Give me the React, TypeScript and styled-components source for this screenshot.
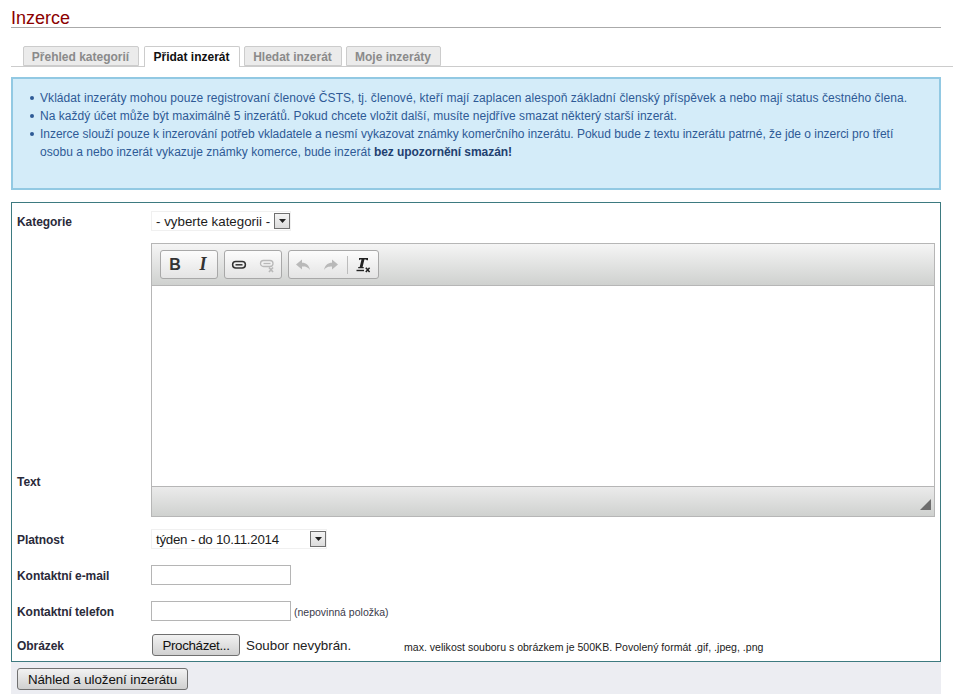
import React from "react"
import styled, { createGlobalStyle } from "styled-components"

const GlobalStyle = createGlobalStyle`
  html, body {
    margin: 0;
    padding: 0;
    background: #fff;
    overflow: hidden;
  }
  body {
    font-family: "Liberation Sans", Arial, sans-serif;
    font-size: 12px;
  }
`

const App = () => {
  return (
    <Page>
      <GlobalStyle />
      <Title>Inzerce</Title>
      <Tabs>
        <Tab $width={116}>Přehled kategorií</Tab>
        <Tab $width={96} $active>Přidat inzerát</Tab>
        <Tab $width={98}>Hledat inzerát</Tab>
        <Tab $width={95}>Moje inzeráty</Tab>
      </Tabs>

      <InfoBox>
        <InfoList>
          <InfoItem $spacing={0.067}>Vkládat inzeráty mohou pouze registrovaní členové ČSTS, tj. členové, kteří mají zaplacen alespoň základní členský příspěvek a nebo mají status čestného člena.</InfoItem>
          <InfoItem $spacing={0.033}>Na každý účet může být maximálně 5 inzerátů. Pokud chcete vložit další, musíte nejdříve smazat některý starší inzerát.</InfoItem>
          <InfoItem $spacing={-0.02}>Inzerce slouží pouze k inzerování potřeb vkladatele a nesmí vykazovat známky komerčního inzerátu. Pokud bude z textu inzerátu patrné, že jde o inzerci pro třetí <SecondLine>osobu a nebo inzerát vykazuje známky komerce, bude inzerát</SecondLine> <b>bez upozornění smazán!</b></InfoItem>
        </InfoList>
      </InfoBox>

      <FormBox>
        <Row>
          <Label>Kategorie</Label>
          <SelectBox $width={140}>
            <SelectText>- vyberte kategorii -</SelectText>
            <SelectArrow><ArrowIcon /></SelectArrow>
          </SelectBox>
        </Row>

        <Row $top={12}>
          <TextLabel>Text</TextLabel>
          <Editor>
            <Toolbar>
              <ToolGroup>
                <ToolButton><Bold>B</Bold></ToolButton>
                <ToolButton><Italic>I</Italic></ToolButton>
              </ToolGroup>
              <ToolGroup>
                <ToolButton><LinkIcon /></ToolButton>
                <ToolButton><UnlinkIcon /></ToolButton>
              </ToolGroup>
              <ToolGroup>
                <ToolButton><UndoIcon /></ToolButton>
                <ToolButton><RedoIcon /></ToolButton>
                <ToolSeparator />
                <ToolButton $wide><ClearIcon /></ToolButton>
              </ToolGroup>
            </Toolbar>
            <EditorBody />
            <EditorFooter><ResizeIcon /></EditorFooter>
          </Editor>
        </Row>

        <Row $top={12}>
          <Label>Platnost</Label>
          <SelectBox $width={176}>
            <SelectText $spacing={-0.28}>týden - do 10.11.2014</SelectText>
            <SelectArrow><ArrowIcon /></SelectArrow>
          </SelectBox>
        </Row>

        <Row $top={16}>
          <Label>Kontaktní e-mail</Label>
          <TextInput type="text" />
        </Row>

        <Row $top={16}>
          <Label>Kontaktní telefon</Label>
          <TextInput type="text" />
          <SmallNote>(nepovinná položka)</SmallNote>
        </Row>

        <Row $top={13}>
          <Label>Obrázek</Label>
          <FileButton type="button">Procházet...</FileButton>
          <FileName>Soubor nevybrán.</FileName>
          <FileHint>max. velikost souboru s obrázkem je 500KB. Povolený formát .gif, .jpeg, .png</FileHint>
        </Row>
      </FormBox>

      <SubmitBar>
        <SubmitButton type="button">Náhled a uložení inzerátu</SubmitButton>
      </SubmitBar>
    </Page>
  )
}

const ArrowIcon = () => (
  <svg width="7" height="4" viewBox="0 0 7 4"><path d="M0 0h7L3.5 4z" fill="#222" /></svg>
)

const LinkIcon = () => (
  <svg width="16" height="16" viewBox="0 0 16 16" fill="none" stroke="#333">
    <rect x="1.6" y="4.6" width="12.8" height="6.4" rx="3.2" strokeWidth="1.5" />
    <path d="M4.5 7.8h7" strokeWidth="1.5" />
  </svg>
)

const UnlinkIcon = () => (
  <svg width="16" height="16" viewBox="0 0 16 16" fill="none" stroke="#b9b9b9">
    <rect x="1.5" y="3.5" width="12.5" height="6" rx="3" strokeWidth="1.3" />
    <path d="M4.5 6.5h7" strokeWidth="1.3" />
    <path d="M10 10.5l4 4.5M14 10.5l-4 4.5" strokeWidth="1.7" />
  </svg>
)

const UndoIcon = () => (
  <svg width="16" height="16" viewBox="0 0 16 16"><path d="M1 7.5L7 2.5v3.2c4 0 7 2 8 7.3-2-3-4-3.6-8-3.6v3.1z" fill="#b9b9b9" /></svg>
)

const RedoIcon = () => (
  <svg width="16" height="16" viewBox="0 0 16 16"><path d="M15 7.5L9 2.5v3.2c-4 0-7 2-8 7.3 2-3 4-3.6 8-3.6v3.1z" fill="#b9b9b9" /></svg>
)

const ClearIcon = () => (
  <svg width="16" height="16" viewBox="0 0 16 16">
    <path d="M4 1h9v2.2h-1.2L11 2.4H9.4L7.6 10h1.1v1.2H3.2V10h1.5l1.8-7.6H5.2l-1.2.8z" fill="#222" />
    <path d="M1.5 12.8h7.5v1.4H1.5z" fill="#222" />
    <path d="M10.8 10.8l3.8 4.2M14.6 10.8l-3.8 4.2" stroke="#222" strokeWidth="1.5" fill="none" />
  </svg>
)

const ResizeIcon = () => (
  <svg width="11" height="11" viewBox="0 0 11 11"><path d="M11 0v11H0z" fill="#6e6e6e" /></svg>
)

const Page = styled.div`
  width: 953px;
  height: 694px;
  box-sizing: border-box;
  padding-top: 8px;
  overflow: hidden;
  color: #2a2a3a;
`

const Title = styled.h1`
  margin: 0 12px 0 11px;
  height: 19px;
  line-height: 21px;
  border-bottom: 1px solid #aaa;
  color: #8b0000;
  font-size: 18px;
  font-weight: normal;
`

const Tabs = styled.div`
  display: flex;
  gap: 4px;
  height: 20px;
  margin: 18px 0 0 11px;
  padding-left: 12px;
  border-bottom: 1px solid #ccc;
`

const Tab = styled.div<{ $active?: boolean; $width: number }>`
  box-sizing: border-box;
  width: ${({ $width }) => $width}px;
  height: ${({ $active }) => ($active ? "21px" : "20px")};
  margin-left: ${({ $active }) => ($active ? "1px" : "0")};
  padding-right: 1px;
  line-height: 20px;
  font-size: 12px;
  font-weight: bold;
  text-align: center;
  white-space: nowrap;
  border: 1px solid #ccc;
  border-bottom: ${({ $active }) => ($active ? "none" : "1px solid #ccc")};
  border-radius: 2px 2px 0 0;
  background: ${({ $active }) => ($active ? "#fff" : "#ebebeb")};
  color: ${({ $active }) => ($active ? "#111" : "#8a8a8a")};
`

const InfoBox = styled.div`
  box-sizing: border-box;
  width: 930px;
  height: 113px;
  margin: 10px 0 0 11px;
  padding: 10px 26px 0 27px;
  background: #d4ecf9;
  border: 2px solid #92c9e3;
  color: #2e5a96;
  line-height: 18px;
`

const InfoList = styled.ul`
  margin: 0;
  padding: 0;
  list-style: none;

  b {
    color: #1f4070;
    letter-spacing: -0.06px;
  }
`

const InfoItem = styled.li<{ $spacing: number }>`
  position: relative;
  letter-spacing: ${({ $spacing }) => $spacing}px;

  &::before {
    content: "";
    position: absolute;
    left: -10px;
    top: 7px;
    width: 4px;
    height: 4px;
    border-radius: 50%;
    background: #2e5a96;
  }
`

const SecondLine = styled.span`
  letter-spacing: 0.03px;
`

const FormBox = styled.div`
  box-sizing: border-box;
  width: 930px;
  height: 460px;
  margin: 12px 0 0 11px;
  padding: 8px 5px 0 5px;
  border: 1px solid #3d7a80;
`

const Row = styled.div<{ $top?: number }>`
  display: flex;
  align-items: center;
  margin-top: ${({ $top }) => $top || 0}px;
`

const Label = styled.label`
  flex: 0 0 134px;
  padding-top: 2px;
  font-weight: bold;
  font-size: 12px;
  letter-spacing: -0.06px;
  color: #2a2a3a;
`

const TextLabel = styled(Label)`
  align-self: flex-end;
  padding-bottom: 28px;
`

const SelectBox = styled.div<{ $width: number }>`
  box-sizing: border-box;
  display: flex;
  align-items: center;
  justify-content: space-between;
  width: ${({ $width }) => $width}px;
  height: 20px;
  padding: 0 0 0 4px;
  border: 1px solid #f0f0f0;
  background: #fff;
`

const SelectText = styled.span<{ $spacing?: number }>`
  font-size: 13.33px;
  letter-spacing: ${({ $spacing }) => $spacing || 0}px;
  color: #1c1c1c;
  white-space: nowrap;
`

const SelectArrow = styled.span`
  box-sizing: border-box;
  display: flex;
  align-items: center;
  justify-content: center;
  width: 16px;
  height: 16px;
  border: 1px solid #707070;
  background: linear-gradient(#f4f4f4, #dcdcdc);
`

const Editor = styled.div`
  box-sizing: border-box;
  width: 784px;
  height: 274px;
  display: flex;
  flex-direction: column;
  border: 1px solid #b6b6b6;
`

const Toolbar = styled.div`
  box-sizing: border-box;
  flex: 0 0 42px;
  display: flex;
  gap: 6px;
  padding: 6px 8px 0;
  background: linear-gradient(#f5f5f5, #cfd1cf);
  border-bottom: 1px solid #b6b6b6;
`

const ToolGroup = styled.div`
  box-sizing: border-box;
  display: flex;
  align-items: center;
  height: 29px;
  border: 1px solid #a8a8a8;
  border-radius: 3px;
  background: linear-gradient(#fcfcfc, #e4e4e4);
`

const ToolButton = styled.span<{ $wide?: boolean }>`
  display: flex;
  align-items: center;
  justify-content: center;
  width: ${({ $wide }) => ($wide ? "30px" : "28px")};
  height: 27px;
`

const ToolSeparator = styled.span`
  width: 1px;
  height: 18px;
  margin-left: 2px;
  background: #bcbcbc;
`

const Bold = styled.span`
  font: bold 16px "Liberation Sans", Arial, sans-serif;
  color: #333;
`

const Italic = styled.span`
  font: italic bold 18px "Liberation Serif", "Times New Roman", serif;
  color: #333;
`

const EditorBody = styled.div`
  flex: 1;
  background: #fff;
`

const EditorFooter = styled.div`
  box-sizing: border-box;
  flex: 0 0 30px;
  display: flex;
  align-items: flex-end;
  justify-content: flex-end;
  padding: 0 3px 6px 0;
  background: linear-gradient(#ebebeb, #cfd1cf);
  border-top: 1px solid #b6b6b6;
`

const TextInput = styled.input`
  box-sizing: border-box;
  width: 140px;
  height: 20px;
  padding: 0 3px;
  border: 1px solid #b5b5b5;
  background: #fff;
`

const SmallNote = styled.span`
  margin-left: 3px;
  padding-top: 2px;
  font-size: 10.5px;
  color: #3a3a4a;
`

const FileButton = styled.button`
  box-sizing: border-box;
  width: 88px;
  height: 22px;
  margin-left: 1px;
  padding: 0;
  border: 1px solid #707070;
  border-radius: 3px;
  background: linear-gradient(#f2f2f2, #d0d0d0);
  font: 13.33px "Liberation Sans", Arial, sans-serif;
  letter-spacing: -0.33px;
  color: #111;
`

const FileName = styled.span`
  margin-left: 6px;
  width: 158px;
  font-size: 13.33px;
  color: #222;
  white-space: nowrap;
`

const FileHint = styled.span`
  padding-top: 3px;
  font-size: 10.55px;
  color: #222;
  white-space: nowrap;
`

const SubmitBar = styled.div`
  box-sizing: border-box;
  width: 930px;
  height: 33px;
  margin-left: 11px;
  padding: 6px 0 0 6px;
  background: #ecedf2;
`

const SubmitButton = styled.button`
  box-sizing: border-box;
  width: 171px;
  height: 22px;
  padding: 0;
  border: 1px solid #707070;
  border-radius: 3px;
  background: linear-gradient(#f2f2f2, #d0d0d0);
  font: 13.33px "Liberation Sans", Arial, sans-serif;
  letter-spacing: -0.08px;
  color: #111;
`

export default App
